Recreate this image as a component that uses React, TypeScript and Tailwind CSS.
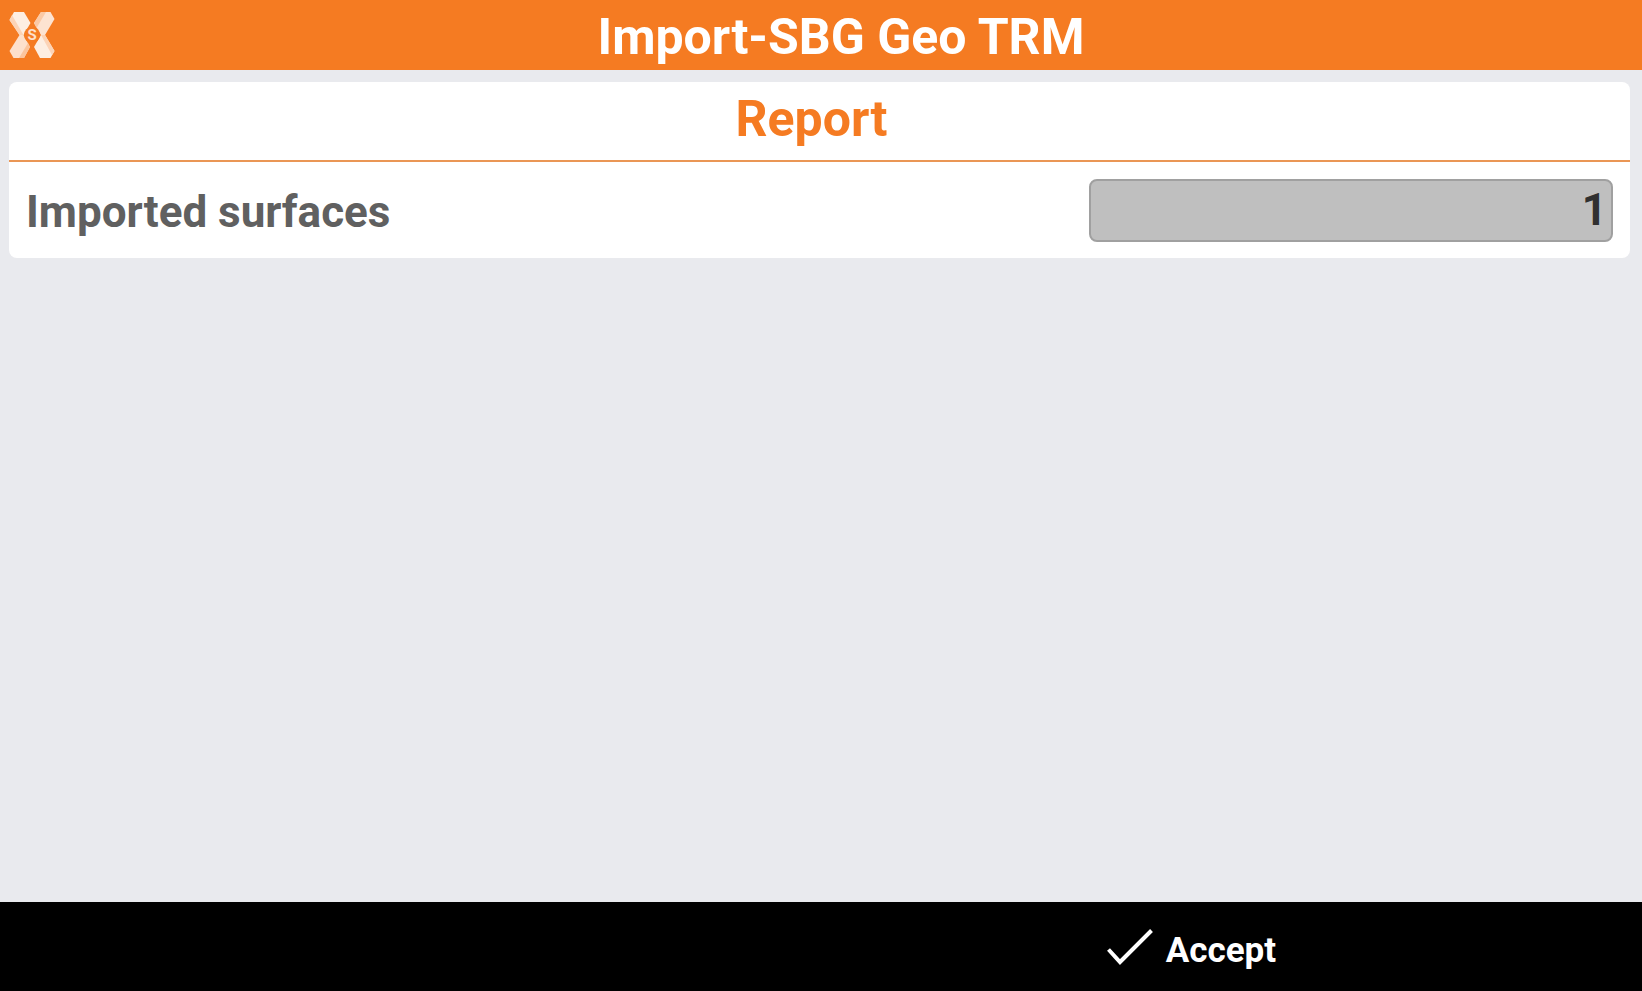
import { useId } from 'react';

interface ReportRow {
  label: string;
  value: number;
}

const rows: ReportRow[] = [{ label: 'Imported surfaces', value: 1 }];

function Logo() {
  return (
    <svg viewBox="0 0 48 48" className="size-12" aria-hidden="true">
      <path d="M6 1H16L22.500 12L15.500 24H11.500L1.500 9Z" fill="#fdeee2" />
      <path d="M1.500 9L4 4L15.500 24H11.500Z" fill="#fcd3b6" />
      <path d="M33 1H42.500L46.500 8L37 24H33L26 12Z" fill="#fde3d1" />
      <path d="M33 1H38L28.500 17L26 12Z" fill="#fbc9a5" />
      <path d="M11.500 24H15.500L22 36L16 47H5.500L1.500 40Z" fill="#fde0cc" />
      <path d="M20 32L22 36L16 47H11Z" fill="#fbc49c" />
      <path d="M33 24H37L46.500 40L42.500 47H32L26 36Z" fill="#fdeee2" />
      <path d="M33 24H37L46.500 40L44 44Z" fill="#fcd3b6" />
      <circle cx="24" cy="24" r="8" fill="#f57b22" />
      <text x="24" y="29" textAnchor="middle" fontSize="15" fontWeight="700" fill="#fde0cc">
        S
      </text>
    </svg>
  );
}

function CheckMark() {
  return (
    <svg viewBox="0 0 46 36" className="h-9 w-[46px]" fill="none" stroke="white" strokeWidth="4" aria-hidden="true">
      <path d="M1.5 20.5L13 33L44.5 1.5" />
    </svg>
  );
}

function Row({ label, value }: ReportRow) {
  const id = useId();

  return (
    <div className="flex items-center justify-between px-[17px] py-4">
      <label htmlFor={id} className="pt-1 text-[44px] leading-[60px] text-[#606060]">
        {label}
      </label>
      <input
        id={id}
        type="text"
        readOnly
        value={value}
        className="h-[63px] w-[33%] rounded-lg border-2 border-[#a0a0a0] bg-[#bfbfbf] px-1 text-right text-[44px] text-[#303030] outline-none"
      />
    </div>
  );
}

export default function App() {
  return (
    <div className="flex min-h-screen flex-col bg-[#e9eaee] font-[Roboto,sans-serif] font-bold">
      <header className="flex h-[70px] items-center bg-[#f57b22] pr-4 pl-2 text-white">
        <Logo />
        <h1 className="flex-1 pt-1 text-center text-[50px] leading-[60px]">Import-SBG Geo TRM</h1>
      </header>

      <main className="flex-1 pt-3 pr-3 pl-[9px]">
        <section className="rounded-lg bg-white">
          <h2 className="border-b-2 border-[#ea9655] pr-4 pb-2 pt-1 text-center text-[50px] leading-[66px] text-[#f57b22]">
            Report
          </h2>
          {rows.map((row) => (
            <Row key={row.label} {...row} />
          ))}
        </section>
      </main>

      <footer className="grid h-[89px] grid-cols-3 bg-black">
        <button type="button" className="col-start-3 flex items-center gap-[13px] px-3 text-[35px] leading-[44px] text-white">
          <CheckMark />
          <span className="pt-2">Accept</span>
        </button>
      </footer>
    </div>
  );
}
